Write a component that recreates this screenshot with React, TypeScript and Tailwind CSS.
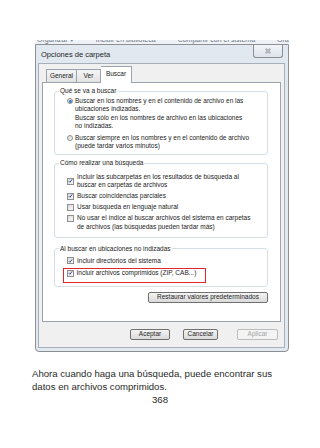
import React from "react"

function Check({ checked }: { checked?: boolean }) {
  return (
    <span className="flex h-[7px] w-[7px] shrink-0 items-center justify-center border border-[#8f8f8f] bg-linear-to-br from-[#dcdcdc] to-[#fafafa]">
      {checked ? (
        <svg viewBox="0 0 7 7" className="h-[6px] w-[6px]">
          <path d="M1.1 3.7 L2.7 5.3 L5.9 1.1" fill="none" stroke="#2d4b86" strokeWidth="1.3" />
        </svg>
      ) : null}
    </span>
  )
}

function Radio({ checked }: { checked?: boolean }) {
  return (
    <span className="mt-[1.5px] flex h-[6px] w-[6px] shrink-0 items-center justify-center rounded-full border border-[#8f8f8f] bg-linear-to-br from-[#d8d8d8] to-[#fafafa]">
      {checked ? <span className="h-[3px] w-[3px] rounded-full bg-linear-to-br from-[#1b4f94] to-[#55a4e4]" /> : null}
    </span>
  )
}

function Group({ title, className, children }: { title: string; className?: string; children: React.ReactNode }) {
  return (
    <fieldset className={"rounded-[3px] border border-[#d5dfe5] " + (className ?? "")}>
      <legend className="ml-[4px] px-[1px] leading-[8.5px]">{title}</legend>
      {children}
    </fieldset>
  )
}

function Btn({ label, width, disabled }: { label: string; width: string; disabled?: boolean }) {
  return (
    <div
      className={
        "flex h-[11px] items-center justify-center rounded-[2px] border " +
        width +
        (disabled
          ? " border-[#bcbcbc] bg-[#f4f4f4] text-[#a3a3a3]"
          : " border-[#707070] bg-linear-to-b from-[#f4f4f4] to-[#dadada] text-[#1e1e1e]")
      }
    >
      {label}
    </div>
  )
}

export default function App() {
  return (
    <div className="h-[448px] w-[320px] overflow-hidden bg-white font-['Liberation_Sans',Arial,sans-serif] text-[#222]">
      <div className="h-[40px]" />

      {/* strip of the window behind, cut off at the top */}
      <div className="ml-[35px] flex h-[4px] w-[254px] items-end overflow-hidden bg-[#eef2f6]">
        <div className="flex gap-[22px] whitespace-nowrap pl-[2px] text-[7px] leading-[8px] text-[#6a7280]">
          <span>Organizar ▾</span>
          <span>Incluir en biblioteca</span>
          <span>Compartir con el sistema</span>
          <span>Grabar</span>
        </div>
      </div>

      {/* dialog */}
      <div className="ml-[35px] flex h-[308px] w-[254px] flex-col rounded-b-[4px] border border-[#8d9196] bg-[#e2e8ef]">
        <div className="flex h-[18px] items-start justify-between">
          <div className="mt-[5px] pl-[5px] text-[7.5px] leading-[9px] text-[#1e1e1e]">Opciones de carpeta</div>
          <div className="mr-[5px] flex h-[13px] w-[30px] items-center justify-center rounded-b-[3px] border border-t-0 border-[#8a8e94] bg-linear-to-b from-[#f3f5f8] to-[#dde3ea]">
            <svg viewBox="0 0 10 8" className="h-[6px] w-[8px]">
              <path d="M2 1 L8 7 M8 1 L2 7" stroke="#7d848c" strokeWidth="2" />
              <path d="M2 1 L8 7 M8 1 L2 7" stroke="#eef1f4" strokeWidth="0.7" />
            </svg>
          </div>
        </div>

        <div className="ml-[2px] mr-[3px] flex h-[285px] flex-col border border-[#a7b0ba] bg-[#f0f0f0] px-[3px] pt-[2px] text-[6.5px] leading-[8.5px]">
          {/* tabs */}
          <div className="flex h-[16px] items-end pl-[4px]">
            <div className="flex h-[13px] w-[31px] items-center justify-center border border-b-0 border-[#9ba3ad] bg-linear-to-b from-[#f6f6f6] to-[#e2e2e2]">
              General
            </div>
            <div className="flex h-[13px] w-[24px] items-center justify-center border border-b-0 border-l-0 border-[#9ba3ad] bg-linear-to-b from-[#f6f6f6] to-[#e2e2e2]">
              Ver
            </div>
            <div className="relative z-10 -mb-px flex h-[17px] w-[31px] items-start justify-center border border-b-0 border-l-0 border-[#9ba3ad] bg-white pt-[3px]">
              Buscar
            </div>
          </div>

          {/* panel */}
          <div className="flex h-[240px] flex-col border border-[#9ba3ad] bg-white pl-[11px] pr-[12px] pt-[4px]">
            <Group title="Qué se va a buscar" className="pb-[3.5px]">
              <div className="flex flex-col gap-[3px] pl-[12px] pt-[1px]">
                <div className="flex items-start gap-[2px]">
                  <Radio checked />
                  <div className="whitespace-nowrap">
                    <div>Buscar en los nombres y en el contenido de archivo en las</div>
                    <div>ubicaciones indizadas.</div>
                    <div>Buscar sólo en los nombres de archivo en las ubicaciones</div>
                    <div>no indizadas.</div>
                  </div>
                </div>
                <div className="flex items-start gap-[2px]">
                  <Radio />
                  <div className="whitespace-nowrap">
                    <div>Buscar siempre en los nombres y en el contenido de archivo</div>
                    <div>(puede tardar varios minutos)</div>
                  </div>
                </div>
              </div>
            </Group>

            <Group title="Cómo realizar una búsqueda" className="mt-[4px] pb-[5.5px]">
              <div className="flex flex-col gap-[2.5px] pl-[12px] pt-[5px]">
                <div className="flex items-center gap-[3px]">
                  <Check checked />
                  <div className="whitespace-nowrap">
                    <div>Incluir las subcarpetas en los resultados de búsqueda al</div>
                    <div>buscar en carpetas de archivos</div>
                  </div>
                </div>
                <div className="flex items-center gap-[3px]">
                  <Check checked />
                  <div>Buscar coincidencias parciales</div>
                </div>
                <div className="flex items-center gap-[3px]">
                  <Check />
                  <div>Usar búsqueda en lenguaje natural</div>
                </div>
                <div className="flex items-start gap-[3px]">
                  <span className="mt-[1px]">
                    <Check />
                  </span>
                  <div className="whitespace-nowrap">
                    <div>No usar el índice al buscar archivos del sistema en carpetas</div>
                    <div>de archivos (las búsquedas pueden tardar más)</div>
                  </div>
                </div>
              </div>
            </Group>

            <Group title="Al buscar en ubicaciones no indizadas" className="mt-[7px] pb-[3.5px]">
              <div className="flex flex-col gap-[3px] pl-[12px] pt-[3.5px]">
                <div className="flex items-center gap-[3px]">
                  <Check checked />
                  <div>Incluir directorios del sistema</div>
                </div>
                <div className="-ml-[4px] flex w-[143px] items-center gap-[3px] border-[1.5px] border-[#e0262b] pb-[4px] pl-[2.5px]">
                  <Check checked />
                  <div className="whitespace-nowrap">Incluir archivos comprimidos (ZIP, CAB...)</div>
                </div>
              </div>
            </Group>

            <div className="mt-[5px] flex justify-end">
              <Btn label="Restaurar valores predeterminados" width="w-[120px]" />
            </div>
          </div>

          {/* buttons */}
          <div className="mt-[7px] flex justify-end pr-[3px]">
            <Btn label="Aceptar" width="w-[40px]" />
            <div className="w-[13px]" />
            <Btn label="Cancelar" width="w-[35px]" />
            <div className="w-[19px]" />
            <Btn label="Aplicar" width="w-[41px]" disabled />
          </div>
        </div>
      </div>

      <div className="mt-[15px] pl-[32px] text-[9.6px] leading-[13px] text-[#2a2a2a]">
        <div>Ahora cuando haga una búsqueda, puede encontrar sus</div>
        <div>datos en archivos comprimidos.</div>
      </div>
      <div className="text-center text-[9.6px] leading-[14px] text-[#2a2a2a]">368</div>
    </div>
  )
}
